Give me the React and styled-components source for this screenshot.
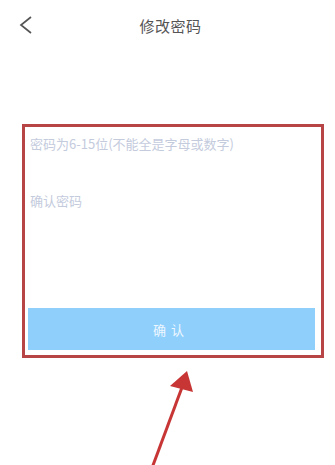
import React from "react";
import styled, { createGlobalStyle } from "styled-components";

const GlobalStyle = createGlobalStyle`
  html, body {
    margin: 0;
    padding: 0;
    background: #ffffff;
    font-family: "Noto Sans CJK SC", "Noto Sans", sans-serif;
  }
`;

const Page = styled.div`
  width: 335px;
  height: 465px;
  overflow: hidden;
  background: #fff;
`;

const Header = styled.div`
  display: grid;
  grid-template-columns: 1fr auto 1fr;
  align-items: center;
  height: 50px;
  padding: 0 0 0 19px;
`;

const Back = styled.svg`
  width: 13px;
  height: 18px;
  display: block;
`;

const Title = styled.div`
  font-size: 15px;
  color: #555;
  letter-spacing: 0.5px;
  margin-left: -13px;
`;

const Frame = styled.div`
  box-sizing: border-box;
  margin: 74px 11px 0 22px;
  height: 234px;
  border: 3px solid #b84545;
  display: flex;
  flex-direction: column;
  padding: 1px 6px 5px 3px;
`;

const Field = styled.input`
  box-sizing: border-box;
  height: 30px;
  border: none;
  outline: none;
  background: transparent;
  padding: 0 0 0 2px;
  margin-top: ${(p) => p.$gap || 0}px;
  font-family: "Noto Sans CJK SC", sans-serif;
  font-size: 13px;
  color: #333;

  &::placeholder {
    color: #c4cbdd;
  }
`;

const Submit = styled.button`
  margin-top: auto;
  height: 42px;
  border: none;
  background: #8ecffc;
  color: #eef7ff;
  font-family: "Noto Sans CJK SC", sans-serif;
  font-size: 13px;
  letter-spacing: 5px;
  padding-left: 5px;
`;

const Arrow = styled.svg`
  display: block;
  width: 335px;
  height: 107px;
`;

export default function App() {
  return (
    <Page>
      <GlobalStyle />
      <Header>
        <Back viewBox="0 0 13 18">
          <path d="M12 1 L2 9 L12 17" fill="none" stroke="#555" strokeWidth="1.7" />
        </Back>
        <Title>修改密码</Title>
        <span />
      </Header>
      <Frame>
        <Field placeholder="密码为6-15位(不能全是字母或数字)" />
        <Field $gap={27} placeholder="确认密码" />
        <Submit>确认</Submit>
      </Frame>
      <Arrow viewBox="0 0 335 107">
        <line x1="152" y1="110" x2="184" y2="24" stroke="#c73535" strokeWidth="3" />
        <polygon points="187,13 170,28 193,34" fill="#c73535" />
      </Arrow>
    </Page>
  );
}
